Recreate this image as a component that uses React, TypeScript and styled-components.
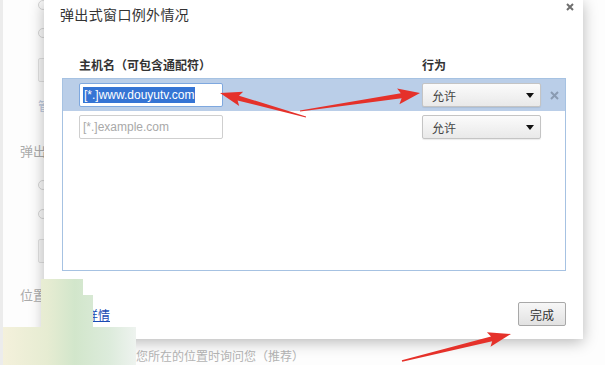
import React from "react";
import styled, { createGlobalStyle } from "styled-components";

const Global = createGlobalStyle`
  html, body { margin: 0; padding: 0; background: #fff; }
  body { font-family: "Liberation Sans", "Noto Sans CJK SC", sans-serif; }
`;

const FONT = `"Liberation Sans", "Noto Sans CJK SC", sans-serif`;

const Screen = styled.div`
  position: relative;
  width: 605px;
  height: 365px;
  overflow: hidden;
  background: #fdfdfd;
  border-left: 3px solid #ececec;
  box-sizing: border-box;
  font-family: ${FONT};
`;

/* ---------- background settings page ---------- */
const Page = styled.div`
  display: flex;
  flex-direction: column;
  padding-left: 17px;
`;

const Radio = styled.div<{ $mt: number }>`
  margin-top: ${(p) => p.$mt}px;
  margin-left: 18px;
  display: flex;
  align-items: center;
  gap: 4px;
  height: 10px;
  &::before {
    content: "";
    width: 8px;
    height: 8px;
    border-radius: 50%;
    border: 1px solid #d6d6d6;
    background: #fafafa;
    flex: none;
  }
`;

const RadioLabel = styled.span`
  font-size: 12px;
  line-height: 14px;
  color: #b4b4b4;
  white-space: nowrap;
`;

const PageSelect = styled.div<{ $mt: number }>`
  margin-top: ${(p) => p.$mt}px;
  margin-left: 18px;
  width: 120px;
  height: 22px;
  border: 1px solid #e0e0e0;
  border-radius: 2px;
  background: #f7f7f7;
`;

const PageLink = styled.div`
  margin-top: 18px;
  margin-left: 18px;
  font-size: 12px;
  line-height: 14px;
  color: #b9c6dc;
`;

const SectionTitle = styled.div<{ $mt: number }>`
  margin-top: ${(p) => p.$mt}px;
  font-size: 13px;
  line-height: 16px;
  color: #ababab;
`;

/* ---------- dialog ---------- */
const Dialog = styled.div`
  position: absolute;
  left: 41px;
  top: 0;
  width: 539px;
  box-sizing: border-box;
  padding: 5px 17px 13px 18px;
  background: #fff;
  box-shadow: 0 3px 14px rgba(0, 0, 0, 0.28);
  display: flex;
  flex-direction: column;
`;

const CloseBtn = styled.div`
  position: absolute;
  right: 9px;
  top: 3px;
  width: 8px;
  height: 8px;
  display: flex;
`;

const Title = styled.div`
  font-size: 14px;
  line-height: 20px;
  color: #333;
  letter-spacing: 0.35px;
  padding-left: -2px;
  margin-left: -2px;
`;

const Cols = styled.div`
  display: grid;
  grid-template-columns: 343px 119px 1fr;
  align-items: center;
`;

const HeaderRow = styled(Cols)`
  margin-top: 33px;
  margin-bottom: 4px;
  padding-left: 17px;
  font-size: 12px;
  line-height: 16px;
  font-weight: bold;
  color: #333;
`;

const Table = styled.div`
  height: 193px;
  box-sizing: border-box;
  border: 1px solid #a6c2e2;
  display: flex;
  flex-direction: column;
`;

const Row = styled(Cols)<{ $selected?: boolean }>`
  height: 32px;
  padding-left: 16px;
  background: ${(p) => (p.$selected ? "#bacee8" : "#fff")};
`;

const Field = styled.div<{ $focused?: boolean }>`
  width: 144px;
  height: 24px;
  box-sizing: border-box;
  border: 1px solid ${(p) => (p.$focused ? "#7ea8df" : "#cfcfcf")};
  border-radius: 2px;
  background: #fff;
  display: flex;
  align-items: center;
  padding-left: 3px;
  font-size: 12px;
  color: #a9a9a9;
  white-space: nowrap;
`;

const Selected = styled.span`
  background: #3574d4;
  color: #fff;
  line-height: 16px;
  padding: 0 1px;
`;

const Select = styled.div`
  position: relative;
  width: 119px;
  height: 24px;
  box-sizing: border-box;
  border: 1px solid #c4c4c4;
  border-radius: 2px;
  background: linear-gradient(#fbfbfb, #e9e9e9);
  box-shadow: 0 1px 1px rgba(0, 0, 0, 0.08);
  display: flex;
  align-items: center;
  padding-left: 9px;
  font-size: 12px;
  color: #444;
  &::after {
    content: "";
    position: absolute;
    right: 6px;
    top: 9px;
    border-left: 4px solid transparent;
    border-right: 4px solid transparent;
    border-top: 5px solid #111;
  }
`;

const Delete = styled.div`
  margin-left: 9px;
  width: 9px;
  height: 9px;
  display: flex;
`;

const Footer = styled.div`
  margin-top: 31px;
  display: flex;
  align-items: center;
  justify-content: space-between;
`;

const Link = styled.a`
  font-size: 12px;
  color: #1a4bb3;
  text-decoration: underline;
`;

const DoneBtn = styled.div`
  width: 48px;
  height: 24px;
  box-sizing: border-box;
  border: 1px solid #a8a8a8;
  border-radius: 2px;
  background: linear-gradient(#f7f7f7, #e2e2e2);
  display: flex;
  align-items: center;
  justify-content: center;
  font-size: 12px;
  color: #333;
`;

/* ---------- overlays ---------- */
const Overlay = styled.svg`
  position: absolute;
  left: -3px;
  top: 0;
  pointer-events: none;
`;

type Pt = [number, number];
function arrow(T: Pt, P: Pt, L: number, W: number, w0: number, w1: number) {
  const dx = P[0] - T[0];
  const dy = P[1] - T[1];
  const len = Math.hypot(dx, dy);
  const ux = dx / len;
  const uy = dy / len;
  const nx = -uy;
  const ny = ux;
  const N: Pt = [P[0] - ux * L, P[1] - uy * L];
  const B: Pt = [P[0] - ux * (L + 3), P[1] - uy * (L + 3)];
  const pts: Pt[] = [
    [T[0] + (nx * w0) / 2, T[1] + (ny * w0) / 2],
    [N[0] + (nx * w1) / 2, N[1] + (ny * w1) / 2],
    [B[0] + (nx * W) / 2, B[1] + (ny * W) / 2],
    P,
    [B[0] - (nx * W) / 2, B[1] - (ny * W) / 2],
    [N[0] - (nx * w1) / 2, N[1] - (ny * w1) / 2],
    [T[0] - (nx * w0) / 2, T[1] - (ny * w0) / 2],
  ];
  return pts.map((p) => `${p[0].toFixed(1)},${p[1].toFixed(1)}`).join(" ");
}

export default function App() {
  return (
    <>
      <Global />
      <Screen>
        <Page>
          <Radio $mt={0} />
          <Radio $mt={18} />
          <PageSelect $mt={20} />
          <PageLink>管理例外情况…</PageLink>
          <SectionTitle $mt={30}>弹出式窗口</SectionTitle>
          <Radio $mt={20} />
          <Radio $mt={19} />
          <PageSelect $mt={20} />
          <SectionTitle $mt={25}>位置</SectionTitle>
          <Radio $mt={48}>
            <RadioLabel>在网站要求获取您所在的位置时询问您（推荐）</RadioLabel>
          </Radio>
        </Page>

        <Dialog>
          <CloseBtn>
            <svg width="8" height="8" viewBox="0 0 8 8">
              <path d="M1 1L7 7M7 1L1 7" stroke="#6f6f6f" strokeWidth="2" />
            </svg>
          </CloseBtn>
          <Title>弹出式窗口例外情况</Title>
          <HeaderRow>
            <span>主机名（可包含通配符）</span>
            <span>行为</span>
          </HeaderRow>
          <Table>
            <Row $selected>
              <Field $focused>
                <Selected>[*.]www.douyutv.com</Selected>
              </Field>
              <Select>允许</Select>
              <Delete>
                <svg width="9" height="9" viewBox="0 0 9 9">
                  <path d="M1 1L8 8M8 1L1 8" stroke="#8a9bb2" strokeWidth="2" />
                </svg>
              </Delete>
            </Row>
            <Row>
              <Field>[*.]example.com</Field>
              <Select>允许</Select>
            </Row>
          </Table>
          <Footer>
            <Link>了解详情</Link>
            <DoneBtn>完成</DoneBtn>
          </Footer>
        </Dialog>

        <Overlay width="605" height="365" viewBox="0 0 605 365">
          <defs>
            <linearGradient id="wm" x1="0" y1="0" x2="1" y2="0">
              <stop offset="0" stopColor="#f5f1dc" />
              <stop offset="0.35" stopColor="#e6ecd2" />
              <stop offset="0.55" stopColor="#d2e6cb" />
              <stop offset="0.8" stopColor="#dcebdb" />
              <stop offset="1" stopColor="#eef3ef" />
            </linearGradient>
          </defs>
          <path
            d="M41 279 H83 V295 H93 V327 H136 V365 H0 V327 H41 Z"
            fill="url(#wm)"
          />
          <g fill="#e5312a">
            <polygon points={arrow([306, 117], [220, 93], 19, 15, 1, 5)} />
            <polygon points={arrow([300, 111], [420, 93], 19, 16, 1, 5)} />
            <polygon points={arrow([402, 361], [511, 334], 20, 15, 1.5, 5)} />
          </g>
        </Overlay>
      </Screen>
    </>
  );
}
